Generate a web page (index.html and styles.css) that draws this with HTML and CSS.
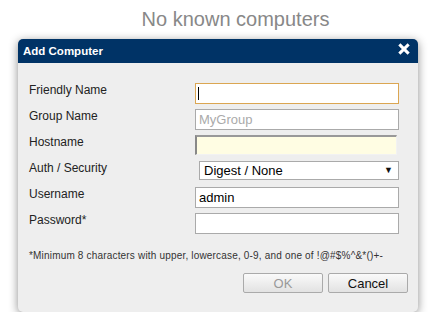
FILE: index.html
```html
<!DOCTYPE html>
<html lang="en">
<head>
  <meta charset="UTF-8">
  <title>Add Computer</title>
  <link rel="stylesheet" href="styles.css">
</head>
<body>
  <h2 class="empty">No known computers</h2>

  <div class="dialog">
    <div class="dialog-head">
      <span>Add Computer</span>
      <svg class="close" width="12" height="12" viewBox="0 0 12 12">
        <path d="M2.4 2.4 L9.6 9.6 M9.6 2.4 L2.4 9.6" stroke="#fff" stroke-width="3" stroke-linecap="square" fill="none"/>
      </svg>
    </div>

    <div class="dialog-body">
      <div class="form">
        <label>Friendly Name</label>
        <span class="field focused"><input type="text"></span>

        <label>Group Name</label>
        <input type="text" placeholder="MyGroup">

        <label>Hostname</label>
        <input type="text" class="required">

        <label>Auth / Security</label>
        <span class="select">
          <select>
            <option>Digest / None</option>
          </select>
        </span>

        <label>Username</label>
        <input type="text" value="admin">

        <label>Password*</label>
        <input type="password">
      </div>

      <p class="note">*Minimum 8 characters with upper, lowercase, 0-9, and one of !@#$%^&amp;*()+-</p>

      <div class="buttons">
        <button class="btn" disabled>OK</button>
        <button class="btn">Cancel</button>
      </div>
    </div>
  </div>
</body>
</html>
```

FILE: styles.css
```css
body {
  margin: 0;
  background: #fff;
  font-family: "Liberation Sans", Arial, sans-serif;
  color: #222;
}
.empty {
  margin: 0;
  padding: 8px 0 0 28px;
  text-align: center;
  font-size: 20px;
  line-height: 23px;
  font-weight: normal;
  color: #888;
}
.dialog {
  margin: 8px 0 0 18px;
  width: 400px;
  background: #eee;
  border-radius: 5px;
  box-shadow: 0 2px 10px rgba(0, 0, 0, 0.45);
  overflow: hidden;
}
.dialog-head {
  height: 24px;
  line-height: 24px;
  padding: 0 8px 0 5px;
  background: #003366;
  color: #fff;
  font-size: 11.5px;
  font-weight: bold;
  display: flex;
  justify-content: space-between;
  align-items: center;
}
.close {
  margin-top: -4px;
}
.dialog-body {
  padding: 20px 10px 19px 11px;
}
.form {
  display: grid;
  grid-template-columns: 166px 204px;
  grid-auto-rows: 21px;
  row-gap: 5px;
}
label {
  font-size: 12px;
  line-height: 14px;
  color: #222;
}
input {
  box-sizing: border-box;
  width: 204px;
  height: 21px;
  margin: 0;
  padding: 0 3px;
  border: 1px solid #aaa;
  border-radius: 0;
  background: #fff;
  font-family: "Liberation Sans", Arial, sans-serif;
  font-size: 13px;
  color: #000;
  outline: none;
}
input::placeholder {
  color: #aaa;
}
input.required {
  width: 202px;
  height: 20px;
  background: #fffde3;
  border-top: 2px solid #999;
  border-left: 2px solid #888;
  border-right: 1px solid #f2f2f2;
  border-bottom: 1px solid #f2f2f2;
}
.field {
  position: relative;
  display: block;
}
.focused input {
  border-color: #dba652;
}
.focused::after {
  content: "";
  position: absolute;
  left: 3px;
  top: 4px;
  width: 1px;
  height: 13px;
  background: #000;
}
.select {
  position: relative;
  display: block;
  margin-left: 4px;
  width: 200px;
  height: 19px;
}
.select select {
  appearance: none;
  box-sizing: border-box;
  width: 200px;
  height: 19px;
  margin: 0;
  padding: 0 0 0 4px;
  border: 1px solid #aaa;
  border-radius: 0;
  background: #fff;
  font-family: "Liberation Sans", Arial, sans-serif;
  font-size: 13px;
  color: #000;
}
.select::after {
  content: "▼";
  position: absolute;
  right: 6px;
  top: 4px;
  font-size: 9px;
  line-height: 10px;
  color: #111;
}
.note {
  margin: 16px 0 0;
  font-size: 10px;
  line-height: 12px;
  letter-spacing: 0.18px;
  color: #333;
}
.buttons {
  display: flex;
  justify-content: flex-end;
  gap: 5px;
  margin-top: 11px;
}
.btn {
  width: 80px;
  height: 20px;
  padding: 0;
  border: 1px solid #aaa;
  border-radius: 2px;
  background: linear-gradient(#fafafa, #e2e2e2);
  font-family: "Liberation Sans", Arial, sans-serif;
  font-size: 13px;
  color: #111;
}
.btn:disabled {
  color: #999;
}
```
